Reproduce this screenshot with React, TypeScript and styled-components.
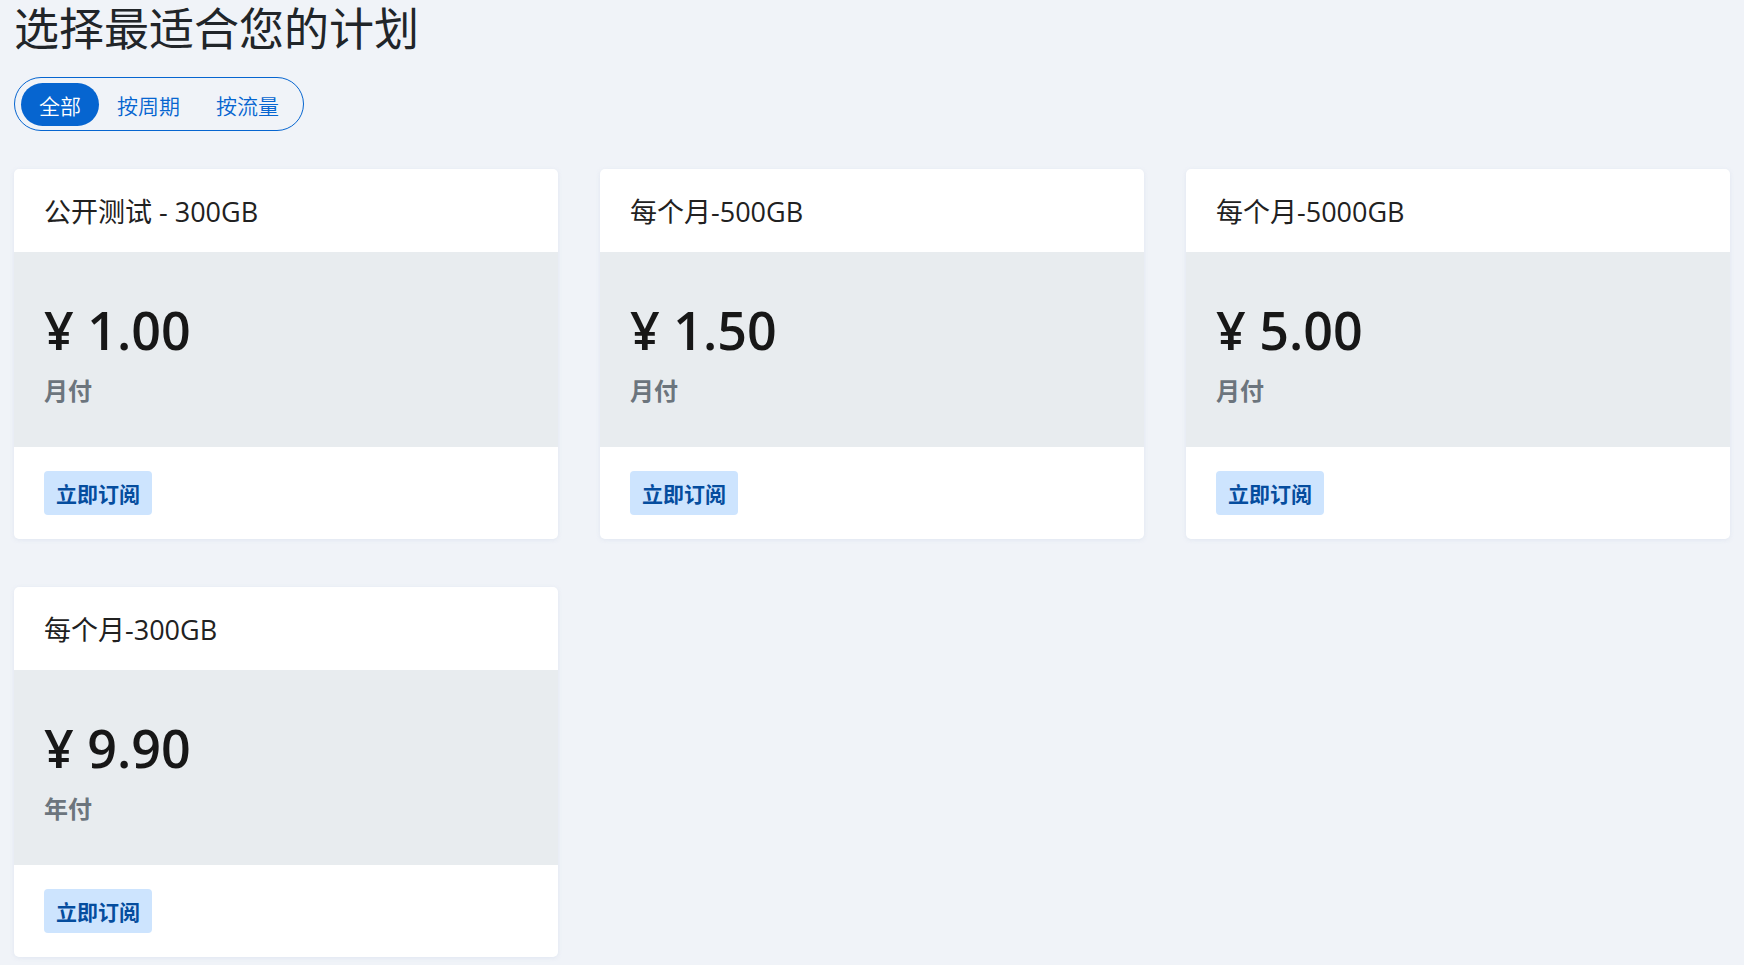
import React, { useState } from 'react';
import styled, { createGlobalStyle } from 'styled-components';

const GlobalStyle = createGlobalStyle`
  *, *::before, *::after { box-sizing: border-box; }
  body {
    margin: 0;
    background: #f0f3f8;
    color: #171717;
    font-family: "Open Sans", "Noto Sans", "Noto Sans CJK SC", sans-serif;
  }
`;

const Page = styled.main`
  padding: 0 14px 8px;
`;

const Title = styled.h1`
  margin: 0;
  font-size: 45px;
  line-height: 58px;
  font-weight: 400;
  color: #212529;
`;

const Filters = styled.div`
  display: flex;
  width: fit-content;
  margin-top: 19px;
  padding: 5px 6px 4px;
  height: 54px;
  border: 1px solid #0665d0;
  border-radius: 27px;
`;

const Filter = styled.button<{ $active: boolean }>`
  padding: 0 18px;
  border: 0;
  border-radius: 22px;
  background: ${p => (p.$active ? '#0665d0' : 'transparent')};
  color: ${p => (p.$active ? '#fff' : '#0665d0')};
  font: 350 21px/38px "Noto Sans CJK SC", sans-serif;
  cursor: pointer;
`;

const Plans = styled.div`
  display: grid;
  grid-template-columns: repeat(3, 1fr);
  gap: 48px 42px;
  margin-top: 38px;
`;

const Card = styled.article`
  overflow: hidden;
  border-radius: 5px;
  background: #fff;
  box-shadow: 0 1px 4px #d8dfedaa;
`;

const Name = styled.h2`
  margin: 0;
  padding: 23px 30px 20px;
  font-size: 27px;
  line-height: 40px;
  font-weight: 400;
  color: #212121;
`;

const PriceBox = styled.div`
  padding: 45px 30px 37px;
  background: #e8ecef;
`;

const Price = styled.p`
  margin: 0;
  font-size: 52px;
  line-height: 66px;
  font-weight: 600;
`;

const Period = styled.p`
  margin: 8px 0 0;
  font-size: 24px;
  line-height: 39px;
  font-weight: 700;
  color: #6c757d;
`;

const Footer = styled.div`
  display: flex;
  padding: 24px 30px;
`;

const Subscribe = styled.button`
  height: 44px;
  padding: 0 12px;
  border: 0;
  border-radius: 4px;
  background: #cde4fe;
  color: #054d9e;
  font: 700 21px/44px "Noto Sans CJK SC", sans-serif;
  cursor: pointer;
`;

const filters = ['全部', '按周期', '按流量'];

const plans = [
  { name: '公开测试 - 300GB', price: '1.00', period: '月付' },
  { name: '每个月-500GB', price: '1.50', period: '月付' },
  { name: '每个月-5000GB', price: '5.00', period: '月付' },
  { name: '每个月-300GB', price: '9.90', period: '年付' },
];

export default function App() {
  const [active, setActive] = useState(filters[0]);
  return (
    <Page>
      <GlobalStyle />
      <Title>选择最适合您的计划</Title>
      <Filters>
        {filters.map(f => (
          <Filter key={f} type="button" $active={f === active} aria-pressed={f === active} onClick={() => setActive(f)}>
            {f}
          </Filter>
        ))}
      </Filters>
      <Plans>
        {plans.map(p => (
          <Card key={p.name}>
            <Name>{p.name}</Name>
            <PriceBox>
              <Price>¥ {p.price}</Price>
              <Period>{p.period}</Period>
            </PriceBox>
            <Footer>
              <Subscribe type="button">立即订阅</Subscribe>
            </Footer>
          </Card>
        ))}
      </Plans>
    </Page>
  );
}
